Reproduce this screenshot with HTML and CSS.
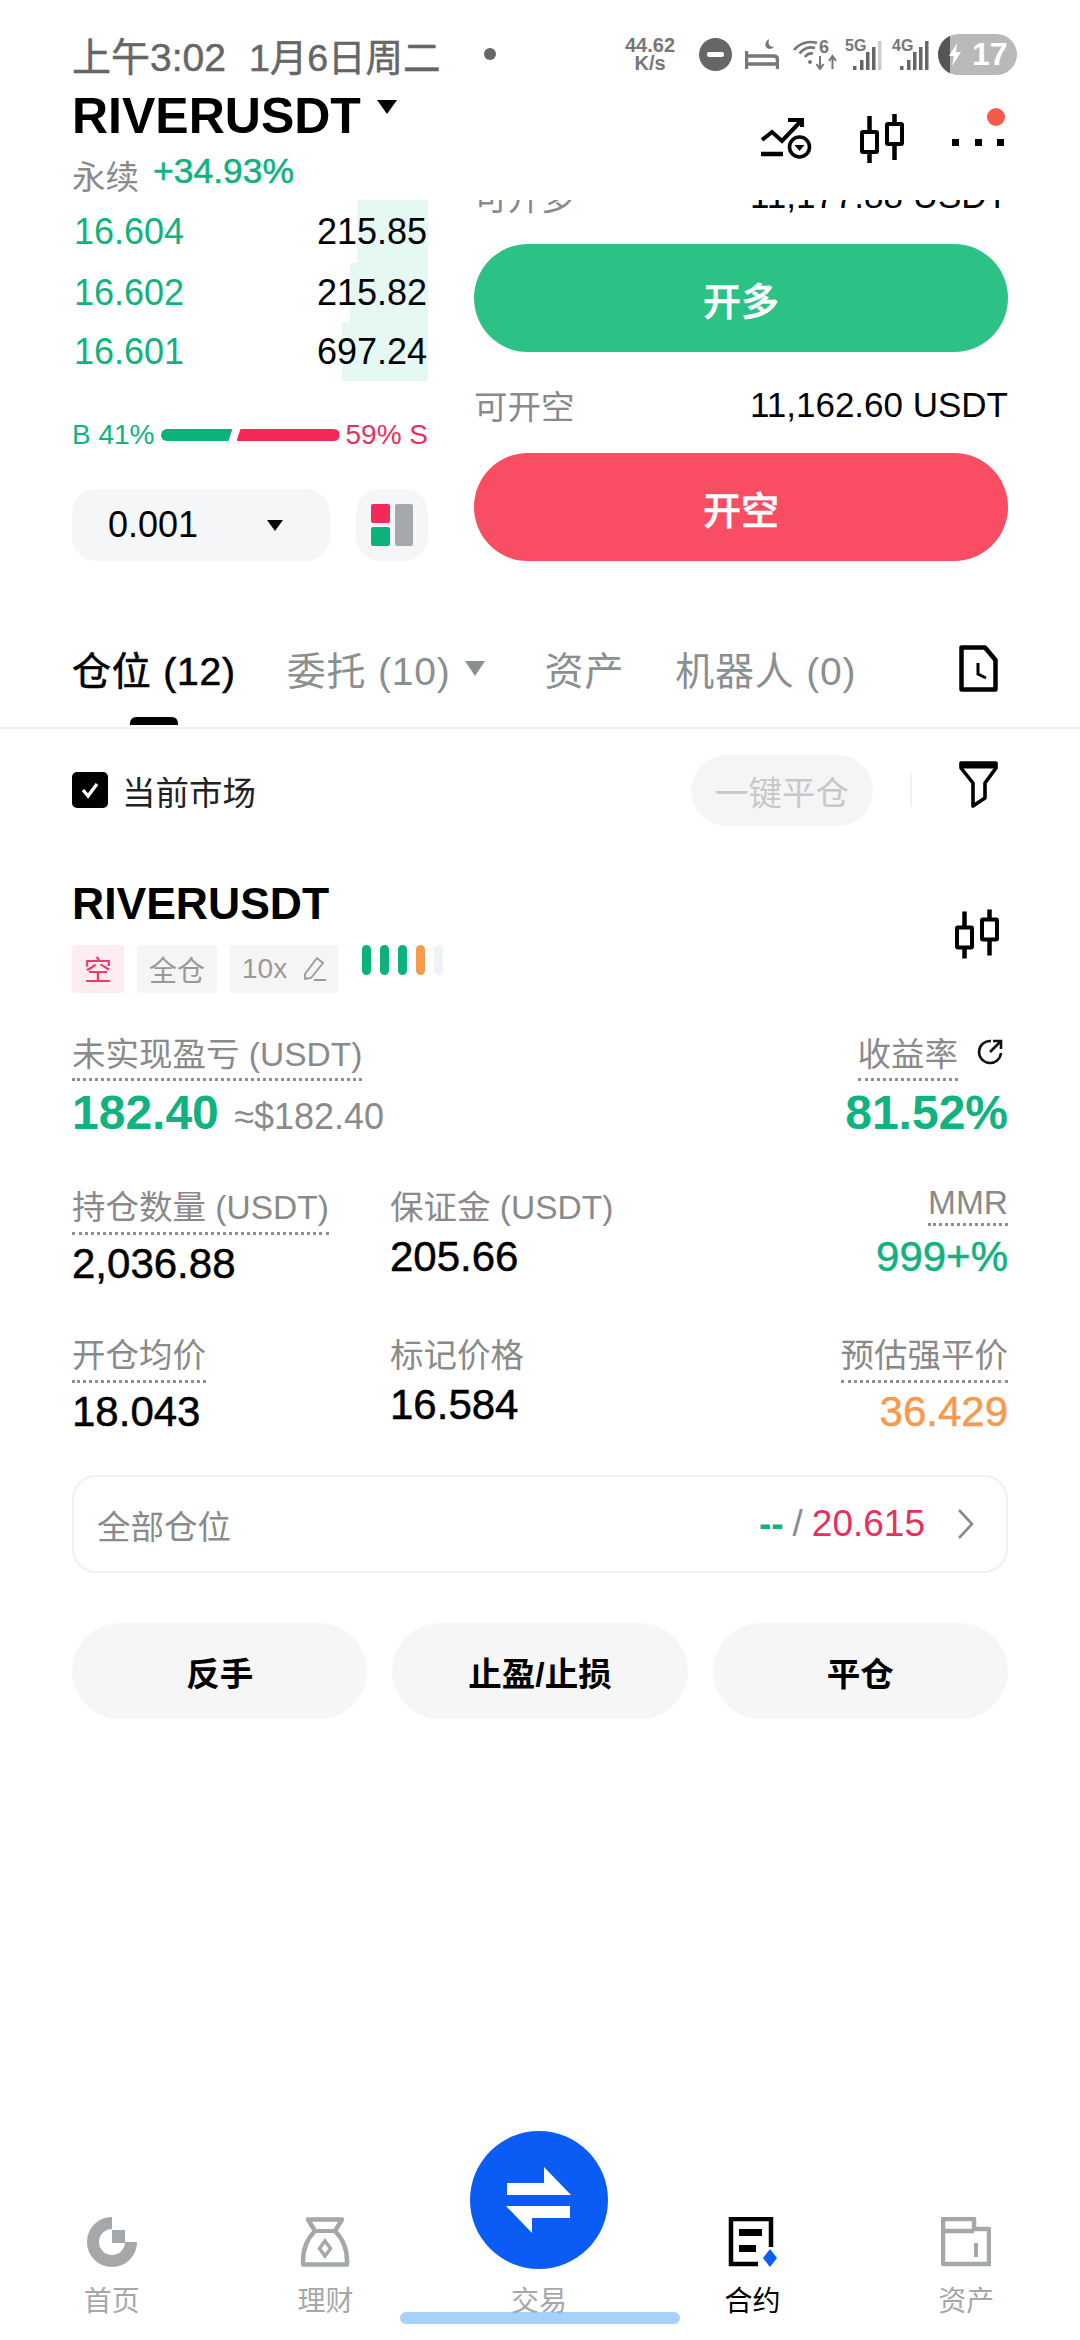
FILE: index.html
```html
<!DOCTYPE html>
<html lang="zh-CN">
  <head>
    <meta charset="utf-8">
    <title>RIVERUSDT</title>
    <link rel="stylesheet" href="styles.css">
  </head>
  <body>
    <div class="page">

      <!-- status bar -->
      <div class="status">
        <span class="clock">上午3:02</span>
        <span class="date">1月6日周二</span>
        <span class="status-dot"></span>
        <span class="speed">44.62<br>K/s</span>
        <svg class="st-dnd" width="33" height="33" viewBox="0 0 33 33"><circle cx="16.5" cy="16.5" r="16.5" fill="#666"/><rect x="8" y="14" width="17" height="5" rx="2" fill="#fff"/></svg>
        <svg class="st-bed" width="34" height="30" viewBox="0 0 34 30"><path d="M1.500 12V30M1.500 25H32.500V30M2 17H29Q32.500 17 32.500 21V25" fill="none" stroke="#777" stroke-width="3.400"/><path d="M24 0Q22 8 29 8Q24 12 21 8Q19 3 24 0Z" fill="#777"/></svg>
        <svg class="st-wifi" width="44" height="32" viewBox="0 0 44 32"><path d="M1 12A21 21 0 0 1 24 5M6.500 15.500A14 14 0 0 1 22 10M12 19A8 8 0 0 1 20 15.500" fill="none" stroke="#777" stroke-width="2.600"/><circle cx="17" cy="24" r="2" fill="#777"/><text x="26" y="15" class="st-six">6</text><path d="M27 18V30M23.500 26L27 31L30.500 26M39.500 31V19M36 23L39.500 18L43 23" fill="none" stroke="#777" stroke-width="2"/></svg>
        <svg class="st-sig" width="37" height="34" viewBox="0 0 37 34"><text x="0" y="14" class="st-txt">5G</text><rect x="8" y="29" width="3.500" height="4" fill="#666"/><rect x="15" y="23" width="3.500" height="10" fill="#666"/><rect x="21" y="15" width="3.500" height="18" fill="#666"/><rect x="27" y="10" width="3.500" height="23" fill="#666"/><rect x="33" y="4" width="3.500" height="29" fill="#ccc"/></svg>
        <svg class="st-sig" width="37" height="34" viewBox="0 0 37 34"><text x="0" y="14" class="st-txt">4G</text><rect x="8" y="29" width="3.500" height="4" fill="#666"/><rect x="15" y="23" width="3.500" height="10" fill="#666"/><rect x="21" y="15" width="3.500" height="18" fill="#666"/><rect x="27" y="10" width="3.500" height="23" fill="#666"/><rect x="33" y="4" width="3.500" height="29" fill="#666"/></svg>
        <div class="battery">
          <span class="battery-fill"></span>
          <svg class="battery-bolt" width="14" height="23" viewBox="0 0 14 23"><path d="M9 0L1 13H6L4 23L13 9H8Z" fill="#fff"/></svg>
          <span class="battery-num">17</span>
        </div>
      </div>

      <!-- pair header -->
      <div class="header">
        <div>
          <div class="pair">RIVERUSDT<span class="pair-arrow"></span></div>
          <div class="pair-sub"><span class="pair-type">永续</span><span class="pair-change">+34.93%</span></div>
        </div>
        <div class="header-icons">
          <svg width="51" height="42" viewBox="0 0 51 42"><path d="M1 23L11 15L21 24L39 5M27 3H41V10" fill="none" stroke="#000" stroke-width="4"/><path d="M0 37H22" stroke="#000" stroke-width="4.500"/><circle cx="38.500" cy="30" r="10" fill="none" stroke="#000" stroke-width="3.600"/><path d="M33.500 28H43.500L38.500 34Z" fill="#000"/></svg>
          <svg class="candle" width="45" height="49" viewBox="0 0 45 49"><path d="M9.500 2V49M34.500 0V46" stroke="#000" stroke-width="4.500"/><rect x="2" y="18" width="15" height="20" rx="1" fill="#fff" stroke="#000" stroke-width="4"/><rect x="27" y="10" width="15" height="20" rx="1" fill="#fff" stroke="#000" stroke-width="4"/></svg>
          <div class="more">
            <span class="more-dot"></span><span class="more-dot"></span><span class="more-dot"></span>
            <span class="more-badge"></span>
          </div>
        </div>
      </div>

      <!-- order book + open buttons -->
      <div class="trade">
        <div class="trade-left">
          <div class="book-row book-first"><span class="depth" style="width:71px"></span><span class="book-price">16.604</span><span class="book-size">215.85</span></div>
          <div class="book-row"><span class="depth" style="width:78px"></span><span class="book-price">16.602</span><span class="book-size">215.82</span></div>
          <div class="book-row"><span class="depth" style="width:86px"></span><span class="book-price">16.601</span><span class="book-size">697.24</span></div>
          <div class="ratio">
            <span class="ratio-b">B 41%</span>
            <div class="ratio-bar"><div class="ratio-buy" style="width:72px"></div><div class="ratio-sell" style="width:103px"></div></div>
            <span class="ratio-s">59% S</span>
          </div>
          <div class="depth-tools">
            <div class="step">0.001<span class="step-arrow"></span></div>
            <div class="layout-btn">
              <svg width="42" height="42" viewBox="0 0 42 42"><rect x="0" y="0" width="19" height="19" rx="2" fill="#f5285a"/><rect x="0" y="23" width="19" height="19" rx="2" fill="#0bb27b"/><rect x="24" y="0" width="18" height="42" rx="2" fill="#a6a9ab"/></svg>
            </div>
          </div>
        </div>
        <div class="trade-right">
          <div class="avail avail-clipped"><span class="avail-label">可开多</span><span>11,177.88 USDT</span></div>
          <div class="open-btn open-long">开多</div>
          <div class="avail"><span class="avail-label">可开空</span><span>11,162.60 USDT</span></div>
          <div class="open-btn open-short">开空</div>
        </div>
      </div>

      <!-- tabs -->
      <div class="tabs">
        <div class="tab tab-on">仓位 (12)</div>
        <div class="tab">委托 (10)<span class="tab-arrow"></span></div>
        <div class="tab tab-wide">资产</div>
        <div class="tab">机器人 (0)</div>
        <svg class="tab-doc" width="39" height="47" viewBox="0 0 39 47"><path d="M2.500 2.500H26L36.500 15V44.500H2.500Z" fill="none" stroke="#000" stroke-width="4.500" stroke-linejoin="round"/><path d="M19 18V29L27 33" fill="none" stroke="#000" stroke-width="3"/></svg>
      </div>

      <!-- current market filter -->
      <div class="toolbar">
        <div class="check"><svg width="20" height="18" viewBox="0 0 20 18"><path d="M3 9L8 15L17 3" fill="none" stroke="#fff" stroke-width="3.400"/></svg></div>
        <span class="check-label">当前市场</span>
        <div class="close-all">一键平仓</div>
        <span class="tool-sep"></span>
        <svg class="filter" width="39" height="47" viewBox="0 0 39 47"><path d="M2 2H37V7L26 22V37L14 45V22L2 7Z" fill="none" stroke="#000" stroke-width="3.600" stroke-linejoin="round"/><path d="M2 5H37" stroke="#000" stroke-width="5"/></svg>
      </div>

      <!-- position -->
      <div class="pos-head">
        <div>
          <div class="pos-name">RIVERUSDT</div>
          <div class="tags">
            <span class="tag tag-short">空</span>
            <span class="tag">全仓</span>
            <span class="tag">10x
              <svg width="24" height="26" viewBox="0 0 24 26"><path d="M3 18L15 2L21 7L9 22L3 23ZM12 24H24" fill="none" stroke="#999" stroke-width="1.800"/></svg>
            </span>
            <div class="risk">
              <span class="risk-bar risk-green"></span><span class="risk-bar risk-green"></span><span class="risk-bar risk-green"></span><span class="risk-bar risk-orange"></span><span class="risk-bar risk-empty"></span>
            </div>
          </div>
        </div>
        <svg class="candle-pos" width="45" height="50" viewBox="0 0 45 49"><path d="M9.500 2V49M34.500 0V46" stroke="#000" stroke-width="4.500"/><rect x="2" y="18" width="15" height="20" rx="1" fill="#fff" stroke="#000" stroke-width="4"/><rect x="27" y="10" width="15" height="20" rx="1" fill="#fff" stroke="#000" stroke-width="4"/></svg>
      </div>

      <div class="stats">
        <div class="stat stat-wide">
          <span class="label dotted label-first">未实现盈亏 (USDT)</span>
          <div class="value-big green">182.40 <span class="approx">≈$182.40</span></div>
        </div>
        <div class="stat stat-right">
          <div class="label-wrap">
            <span class="label dotted label-first">收益率</span>
            <svg class="share" width="28" height="28" viewBox="0 0 28 28"><path d="M15 3A11 11 0 1 0 25 15" fill="none" stroke="#111" stroke-width="2.600"/><path d="M14 14L24 4M17 3H25V11" fill="none" stroke="#111" stroke-width="2.600"/></svg>
          </div>
          <div class="value-big green">81.52%</div>
        </div>

        <div class="stat">
          <span class="label dotted">持仓数量 (USDT)</span>
          <div class="value">2,036.88</div>
        </div>
        <div class="stat">
          <span class="label">保证金 (USDT)</span>
          <div class="value">205.66</div>
        </div>
        <div class="stat stat-right">
          <span class="label dotted label-short">MMR</span>
          <div class="value green">999+%</div>
        </div>

        <div class="stat">
          <span class="label dotted">开仓均价</span>
          <div class="value">18.043</div>
        </div>
        <div class="stat">
          <span class="label">标记价格</span>
          <div class="value">16.584</div>
        </div>
        <div class="stat stat-right">
          <span class="label dotted">预估强平价</span>
          <div class="value orange">36.429</div>
        </div>
      </div>

      <div class="all-pos">
        <span class="all-label">全部仓位</span>
        <span class="all-val"><span class="all-long">--</span><span>/</span><span class="all-short">20.615</span></span>
        <svg width="18" height="32" viewBox="0 0 18 32"><path d="M2 2L15 16L2 30" fill="none" stroke="#8a8a8a" stroke-width="2.600"/></svg>
      </div>

      <div class="actions">
        <div class="action">反手</div>
        <div class="action">止盈/止损</div>
        <div class="action">平仓</div>
      </div>

      <!-- bottom nav -->
      <div class="nav">
        <div class="nav-item">
          <svg width="50" height="50" viewBox="0 0 50 50"><path d="M25 6A19 19 0 1 0 44 25" fill="none" stroke="#a5a8aa" stroke-width="12"/><rect x="25" y="13" width="13" height="13" fill="#a5a8aa"/></svg>
          <span>首页</span>
        </div>
        <div class="nav-item">
          <svg width="50" height="50" viewBox="0 0 50 50"><path d="M8 2.500H42L35 14Q47 26 47 44V47.500H3V44Q3 26 15 14Z" fill="none" stroke="#a5a8aa" stroke-width="4.500" stroke-linejoin="round"/><path d="M15 14H35" stroke="#a5a8aa" stroke-width="4"/><path d="M25 24L30.500 31.500L25 39L19.500 31.500Z" fill="none" stroke="#a5a8aa" stroke-width="3.500"/></svg>
          <span>理财</span>
        </div>
        <div class="nav-item">
          <div class="fab">
            <svg width="66" height="66" viewBox="0 0 66 66"><path d="M1 16H38V0L65 28H1ZM64 39V51H26V66L0 39Z" fill="#fff"/></svg>
          </div>
          <span>交易</span>
        </div>
        <div class="nav-item nav-on">
          <svg width="50" height="50" viewBox="0 0 50 50"><path d="M30 47H3V2H43V30" fill="none" stroke="#000" stroke-width="4.500"/><rect x="11" y="12" width="23" height="7" fill="#000"/><rect x="11" y="28" width="17" height="7" fill="#000"/><path d="M42 32L49 41L42 50L35 41Z" fill="#0a5cf5"/></svg>
          <span>合约</span>
        </div>
        <div class="nav-item">
          <svg width="50" height="50" viewBox="0 0 50 50"><path d="M2 47V2H33V12H48V47ZM2 14H33" fill="none" stroke="#a5a8aa" stroke-width="4.500" stroke-linejoin="round"/><path d="M35 26V40" stroke="#a5a8aa" stroke-width="4"/></svg>
          <span>资产</span>
        </div>
      </div>
      <div class="home-bar"></div>

    </div>
  </body>
</html>
```

FILE: styles.css
```css
body {
    margin: 0;
    background: #fff;
    font-family: "Liberation Sans", "Noto Sans CJK SC", sans-serif;
    color: #000;
}

.page {
    position: relative;
    width: 1080px;
    height: 2340px;
    overflow: hidden;
    display: flex;
    flex-direction: column;
}

.green { color: #10b27f; }
.orange { color: #f79a4e; }

/* status bar */
.status {
    height: 72px;
    padding: 18px 63px 0 72px;
    display: flex;
    align-items: center;
    color: #666;
}

.clock, .date {
    font-size: 37.500px;
    white-space: nowrap;
    -webkit-text-stroke: 0.5px #666;
}

.clock { font-size: 39px; }

.date { margin-left: 23px; }

.status-dot {
    width: 12px;
    height: 12px;
    border-radius: 50%;
    background: #666;
    margin-left: 43px;
}

.speed {
    margin-left: auto;
    width: 54px;
    font-size: 20px;
    line-height: 18px;
    font-weight: 700;
    text-align: center;
    color: #777;
}

.st-dnd { margin-left: 22px; }
.st-bed { margin-left: 13px; }
.st-wifi { margin-left: 14px; }
.st-sig { margin-left: 8px; }
.st-sig + .st-sig { margin-left: 10px; }

.st-txt, .st-six {
    font-family: "Liberation Sans", sans-serif;
    font-size: 16px;
    font-weight: 700;
    fill: #777;
}

.st-six { font-size: 18px; }

.battery {
    position: relative;
    margin-left: 9px;
    width: 79px;
    height: 41px;
    border-radius: 21px;
    background: #b9b9b9;
    overflow: hidden;
    display: flex;
    align-items: center;
    color: #fff;
}

.battery-fill {
    position: absolute;
    left: 0;
    top: 0;
    width: 12px;
    height: 41px;
    background: #555;
}

.battery-bolt {
    position: relative;
    margin-left: 10px;
}

.battery-num {
    margin-left: 10px;
    font-size: 32px;
    font-weight: 700;
}

/* pair header */
.header {
    height: 110px;
    padding: 0 72px;
    display: flex;
    justify-content: space-between;
}

.pair {
    font-size: 50px;
    line-height: 52px;
    font-weight: 700;
    display: flex;
    align-items: center;
    gap: 16px;
}

.pair-arrow, .step-arrow, .tab-arrow {
    width: 0;
    height: 0;
    border-left: 10px solid transparent;
    border-right: 10px solid transparent;
    border-top: 14px solid #000;
}

.pair-arrow { margin-bottom: 18px; }

.pair-sub {
    height: 58px;
    display: flex;
    align-items: center;
    gap: 14px;
}

.pair-type {
    font-size: 33.500px;
    color: #8a8a8a;
    padding-top: 6px;
}

.pair-change {
    font-size: 35.500px;
    color: #10b27f;
    -webkit-text-stroke: 0.5px #10b27f;
}

.header-icons {
    display: flex;
    align-items: flex-start;
    padding-top: 27px;
}

.candle { margin-left: 48px; margin-top: -3px; }

.more {
    position: relative;
    width: 52px;
    margin-left: 47px;
    padding-top: 22px;
    margin-right: 4px;
    display: flex;
    justify-content: space-between;
}

.more-dot {
    width: 7px;
    height: 7px;
    background: #000;
}

.more-badge {
    position: absolute;
    right: -1px;
    top: -9px;
    width: 18px;
    height: 18px;
    border-radius: 50%;
    background: #f45b4b;
}

/* order book + open buttons */
.trade {
    height: 361px;
    padding: 0 72px;
    display: flex;
    gap: 46px;
}

.trade-left { width: 356px; flex: none; }

.book-row {
    position: relative;
    height: 59px;
    padding-left: 2px;
    display: flex;
    align-items: center;
    justify-content: space-between;
    font-size: 36px;
}

.book-first { height: 63px; }

.depth {
    position: absolute;
    right: 0;
    top: 0;
    bottom: 0;
    background: #e5f8f1;
}

.book-price {
    position: relative;
    color: #10b27f;
}

.book-size { position: relative; margin-right: 1px; }

.ratio {
    height: 108px;
    display: flex;
    align-items: center;
    justify-content: space-between;
    font-size: 28px;
}

.ratio-b { color: #10b27f; }
.ratio-s { color: #e8305f; }

.ratio-bar {
    display: flex;
    gap: 4px;
}

.ratio-buy, .ratio-sell { height: 12px; }

.ratio-buy {
    background: #0bb27b;
    border-radius: 6px 0 0 6px;
    clip-path: polygon(0 0, 100% 0, calc(100% - 4px) 100%, 0 100%);
}

.ratio-sell {
    background: #f5285a;
    border-radius: 0 6px 6px 0;
    clip-path: polygon(4px 0, 100% 0, 100% 100%, 0 100%);
}

.depth-tools {
    display: flex;
    justify-content: space-between;
}

.step {
    width: 258px;
    height: 72px;
    padding: 0 47px 0 36px;
    box-sizing: border-box;
    border-radius: 24px;
    background: #f5f6f7;
    display: flex;
    align-items: center;
    justify-content: space-between;
    font-size: 36px;
}

.step-arrow {
    border-left-width: 8px;
    border-right-width: 8px;
    border-top-width: 11px;
}

.layout-btn {
    width: 72px;
    height: 72px;
    border-radius: 24px;
    background: #f5f6f7;
    display: flex;
    align-items: center;
    justify-content: center;
}

.trade-right {
    width: 534px;
    overflow: hidden;
}

.avail {
    height: 97px;
    padding-top: 4px;
    display: flex;
    align-items: center;
    justify-content: space-between;
    font-size: 35px;
}

.avail-clipped { margin-top: -57px; }

.avail-label {
    font-size: 33.500px;
    color: #8a8a8a;
}

.open-btn {
    height: 108px;
    border-radius: 54px;
    display: flex;
    align-items: center;
    justify-content: center;
    color: #fff;
    font-size: 38px;
    font-weight: 500;
    -webkit-text-stroke: 0.5px #fff;
}

.open-long { background: #2dc285; }
.open-short { background: #f94d63; }

/* tabs */
.tabs {
    position: relative;
    height: 168px;
    box-sizing: border-box;
    padding: 48px 82px 0 72px;
    border-bottom: 2px solid #f0f0f0;
    display: flex;
    align-items: center;
    gap: 51px;
}

.tab {
    position: relative;
    font-size: 39px;
    letter-spacing: 0.8px;
    color: #8a8f8f;
    display: flex;
    align-items: center;
    white-space: pre;
}

.tab-on {
    color: #000;
    -webkit-text-stroke: 0.6px #000;
}

.tab-on::after {
    content: "";
    position: absolute;
    left: 58px;
    bottom: -29px;
    width: 48px;
    height: 8px;
    border-radius: 6px 6px 0 0;
    background: #000;
}

.tab-arrow {
    margin-left: 14px;
    border-top-color: #8a8f8f;
    border-top-width: 15px;
}

.tab-wide { margin-left: 9px; }

.tab-doc { margin-left: auto; }

/* current market filter */
.toolbar {
    height: 122px;
    padding: 0 82px 0 72px;
    display: flex;
    align-items: center;
}

.check {
    width: 36px;
    height: 36px;
    border-radius: 5px;
    background: #000;
    display: flex;
    align-items: center;
    justify-content: center;
}

.check-label {
    margin-left: 14px;
    font-size: 33.500px;
    color: #222;
}

.close-all {
    margin-left: auto;
    width: 182px;
    height: 71px;
    border-radius: 36px;
    background: #f5f5f5;
    display: flex;
    align-items: center;
    justify-content: center;
    font-size: 33.500px;
    color: #c8c8c8;
}

.tool-sep {
    width: 2px;
    height: 34px;
    margin: 0 47px 0 37px;
    background: #f0f0f0;
}

.filter { margin-bottom: 12px; }

/* position */
.pos-head {
    margin-top: 27px;
    padding: 0 80px 0 72px;
    display: flex;
    justify-content: space-between;
    align-items: center;
}

.candle-pos { margin-top: -4px; }

.pos-name {
    font-size: 44.500px;
    line-height: 52px;
    font-weight: 700;
}

.tags {
    margin-top: 15px;
    display: flex;
    gap: 13px;
}

.tag {
    height: 48px;
    padding: 0 12px;
    border-radius: 4px;
    background: #f5f5f5;
    color: #999;
    font-size: 28px;
    display: flex;
    align-items: center;
    gap: 15px;
}

.tag-short {
    background: #fdecf0;
    color: #ee3b6c;
}

.risk {
    margin-left: 11px;
    display: flex;
    gap: 9px;
}

.risk-bar {
    width: 9px;
    height: 30px;
    border-radius: 5px;
}

.risk-green { background: #0bb27b; }
.risk-orange { background: #f79a4e; }
.risk-empty { background: #f0f3f5; }

.stats {
    margin-top: 39px;
    padding: 0 72px;
    display: grid;
    grid-template-columns: 318px 1fr auto;
    row-gap: 43px;
}

.stat-wide { grid-column: span 2; }

.stat-right {
    display: flex;
    flex-direction: column;
    align-items: flex-end;
}

.label {
    display: block;
    width: fit-content;
    font-size: 33.500px;
    line-height: 48px;
    color: #8a8a8a;
    white-space: nowrap;
}

.label-first { line-height: 46px; }

.label-short { line-height: 38px; }

.dotted {
    border-bottom: 3px dotted #8f8f8f;
    margin-bottom: 4px;
}

.label-short.dotted {
    padding-bottom: 1px;
    margin-bottom: 6px;
}

.label-wrap {
    display: flex;
    align-items: flex-start;
    gap: 18px;
}

.share { margin-top: 6px; margin-right: 4px; }

.value-big {
    font-size: 48px;
    line-height: 56px;
    font-weight: 700;
    white-space: nowrap;
    height: 56px;
}

.approx {
    font-size: 36px;
    line-height: 1;
    font-weight: 400;
    color: #8a8a8a;
    margin-left: 2px;
}

.value {
    font-size: 42px;
    line-height: 50px;
    -webkit-text-stroke: 0.5px currentColor;
}

.all-pos {
    margin: 38px 72px 0;
    height: 98px;
    box-sizing: border-box;
    padding: 0 31px 0 23px;
    border: 2px solid #f0f0f0;
    border-radius: 24px;
    display: flex;
    align-items: center;
    font-size: 33.500px;
    color: #8a8a8a;
}

.all-val {
    margin-left: auto;
    margin-right: 32px;
    font-size: 37px;
    display: flex;
    gap: 9px;
}

.all-long {
    color: #10b27f;
    font-weight: 700;
}

.all-short { color: #e8305f; }

.actions {
    margin: 50px 72px 0;
    display: flex;
    gap: 25px;
}

.action {
    flex: 1;
    height: 96px;
    border-radius: 48px;
    background: #f6f6f6;
    display: flex;
    align-items: center;
    justify-content: center;
    font-size: 33.500px;
    font-weight: 700;
}

/* bottom nav */
.nav {
    margin-top: auto;
    padding: 0 7px 18px 5px;
    display: grid;
    grid-template-columns: repeat(5, 1fr);
    align-items: end;
}

.nav-item {
    display: flex;
    flex-direction: column;
    align-items: center;
    gap: 15px;
    font-size: 28px;
    line-height: 40px;
    color: #a5a8aa;
}

.nav-on { color: #000; }

.fab {
    width: 138px;
    height: 138px;
    margin-bottom: -2px;
    border-radius: 50%;
    background: #0a5cf5;
    display: flex;
    align-items: center;
    justify-content: center;
}

.home-bar {
    position: absolute;
    left: 400px;
    bottom: 16px;
    width: 280px;
    height: 12px;
    border-radius: 6px;
    background: rgba(120, 185, 245, 0.65);
}
```
